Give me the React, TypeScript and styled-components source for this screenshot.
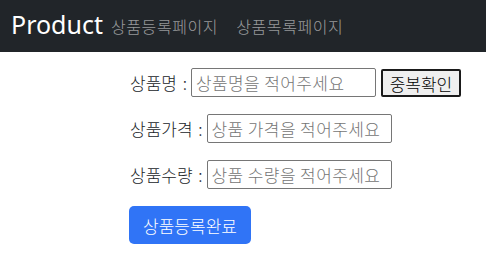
import React from 'react';
import { createGlobalStyle, styled } from 'styled-components';

const GlobalStyle = createGlobalStyle`
  body {
    margin: 0;
    background: #fff;
    font-family: 'Noto Sans CJK KR', 'Noto Sans', sans-serif;
    font-weight: 300;
    color: #212529;
  }
`;

const NavBar = styled.nav`
  height: 52px;
  background-color: #212529;
  display: flex;
  align-items: center;
  padding-left: 11px;
`;

const Brand = styled.span`
  font-family: 'Noto Sans', 'Noto Sans CJK KR', sans-serif;
  font-size: 25px;
  font-weight: 400;
  color: #fff;
  margin-right: 8px;
  margin-top: -4px;
`;

const NavLink = styled.a`
  font-size: 16px;
  letter-spacing: 0.6px;
  color: rgba(255, 255, 255, 0.55);
  text-decoration: none;
  margin-right: 18px;
`;

const Form = styled.form`
  padding: 16px 0 0 129px;
  display: flex;
  flex-direction: column;
  gap: 17px;
  align-items: flex-start;
`;

const Row = styled.div`
  display: flex;
  align-items: center;
  height: 29px;
`;

const Label = styled.label`
  font-size: 17px;
  margin-right: 4px;
  padding-left: 1px;
  word-spacing: 2px;
`;

const TextInput = styled.input`
  box-sizing: border-box;
  width: 185px;
  height: 29px;
  border: 1px solid #767676;
  border-radius: 2px;
  padding: 1px 4px;
  font-family: inherit;
  font-weight: 300;
  font-size: 17px;
  letter-spacing: 0.4px;

  &::placeholder {
    color: #757575;
  }
`;

const CheckButton = styled.button`
  box-sizing: border-box;
  margin-left: 5px;
  width: 80px;
  height: 28px;
  border: 2px solid #1a1a1a;
  border-radius: 2px;
  background-color: #efefef;
  font-family: inherit;
  font-weight: 300;
  font-size: 17px;
  color: #000;
  padding: 0;
`;

const SubmitButton = styled.button`
  width: 122px;
  height: 38px;
  border: none;
  border-radius: 5px;
  background-color: #3074f6;
  color: #fff;
  font-family: inherit;
  font-weight: 300;
  font-size: 17px;
  padding: 0;
`;

const App = () => {
  return (
    <>
      <GlobalStyle />
      <NavBar>
        <Brand>Product</Brand>
        <NavLink href="#">상품등록페이지</NavLink>
        <NavLink href="#">상품목록페이지</NavLink>
      </NavBar>
      <Form onSubmit={(e) => e.preventDefault()}>
        <Row>
          <Label>상품명 :</Label>
          <TextInput placeholder="상품명을 적어주세요" />
          <CheckButton type="button">중복확인</CheckButton>
        </Row>
        <Row>
          <Label>상품가격 :</Label>
          <TextInput placeholder="상품 가격을 적어주세요" />
        </Row>
        <Row>
          <Label>상품수량 :</Label>
          <TextInput placeholder="상품 수량을 적어주세요" />
        </Row>
        <SubmitButton type="submit">상품등록완료</SubmitButton>
      </Form>
    </>
  );
};

export default App;
